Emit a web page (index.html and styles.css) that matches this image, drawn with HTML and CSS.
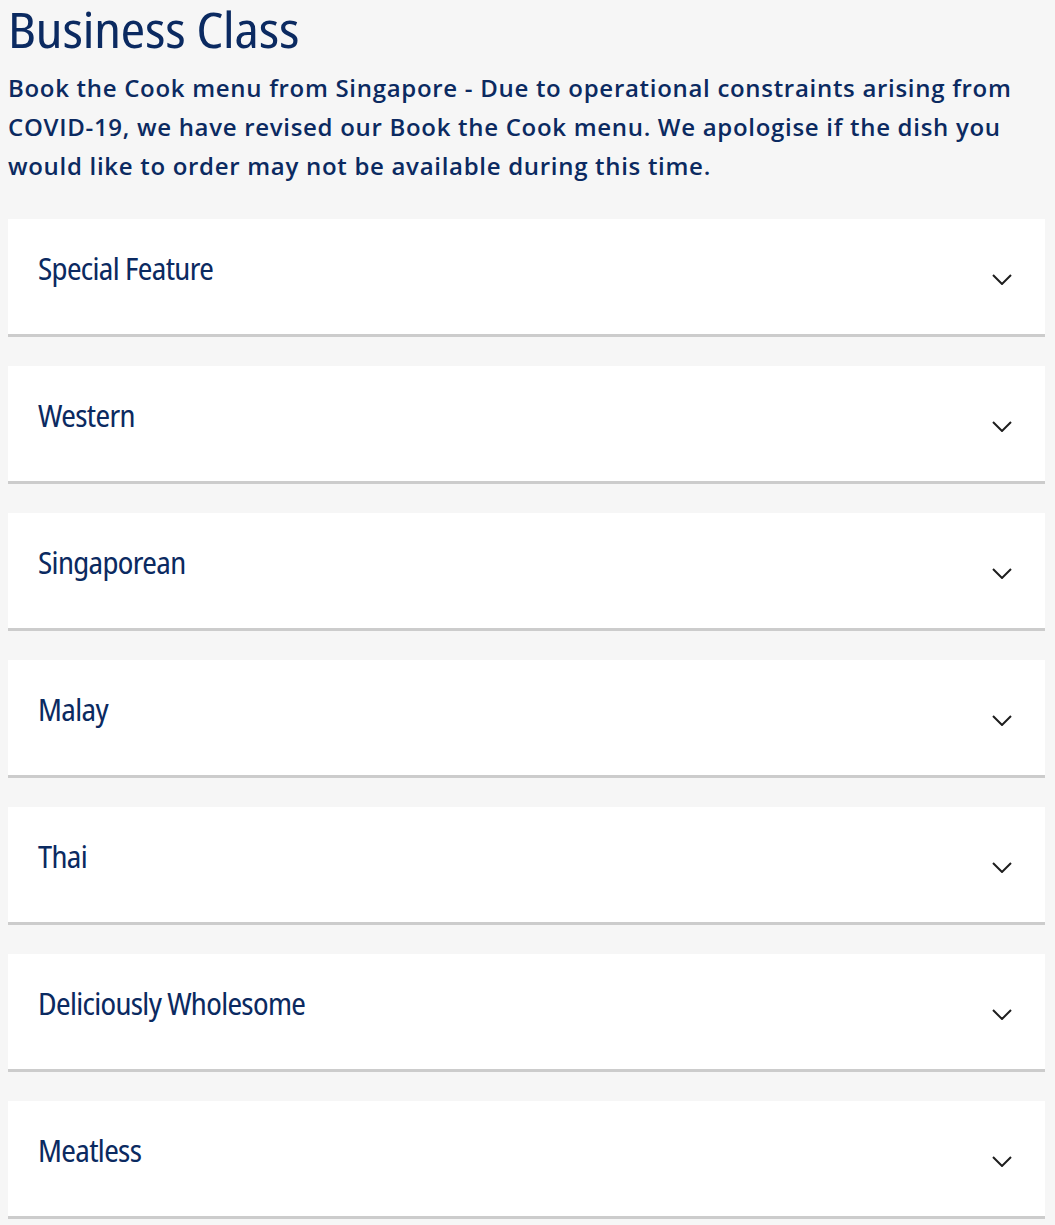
FILE: index.html
```html
<!DOCTYPE html>
<html lang="en">
<head>
<meta charset="utf-8">
<title>Business Class</title>
<link rel="stylesheet" href="styles.css">
</head>
<body>
<main class="page">
  <h1 class="title">Business Class</h1>
  <p class="intro">Book the Cook menu from Singapore - Due to operational constraints arising from COVID-19, we have revised our Book the Cook menu. We apologise if the dish you would like to order may not be available during this time.</p>
  <ul class="accordion">
    <li class="item"><span class="label">Special Feature</span><svg class="chev" viewBox="0 0 20 11"><path d="M1 1 L10 10 L19 1"/></svg></li>
    <li class="item"><span class="label">Western</span><svg class="chev" viewBox="0 0 20 11"><path d="M1 1 L10 10 L19 1"/></svg></li>
    <li class="item"><span class="label">Singaporean</span><svg class="chev" viewBox="0 0 20 11"><path d="M1 1 L10 10 L19 1"/></svg></li>
    <li class="item"><span class="label">Malay</span><svg class="chev" viewBox="0 0 20 11"><path d="M1 1 L10 10 L19 1"/></svg></li>
    <li class="item"><span class="label">Thai</span><svg class="chev" viewBox="0 0 20 11"><path d="M1 1 L10 10 L19 1"/></svg></li>
    <li class="item"><span class="label">Deliciously Wholesome</span><svg class="chev" viewBox="0 0 20 11"><path d="M1 1 L10 10 L19 1"/></svg></li>
    <li class="item"><span class="label">Meatless</span><svg class="chev" viewBox="0 0 20 11"><path d="M1 1 L10 10 L19 1"/></svg></li>
  </ul>
</main>
</body>
</html>
```

FILE: styles.css
```css
html, body {
  margin: 0;
  padding: 0;
  background: #f6f6f6;
}
.page {
  padding: 0 10px 0 8px;
  color: #0b2a61;
}
.title {
  margin: 0;
  padding-top: 1px;
  font-family: "Noto Sans Display", "Open Sans", sans-serif;
  font-weight: 400;
  font-stretch: 87.5%;
  font-size: 50px;
  line-height: 56px;
  letter-spacing: -0.1px;
  color: #0b2a61;
}
.intro {
  margin: 11px 0 0;
  font-family: "Open Sans", sans-serif;
  font-weight: 600;
  font-size: 24px;
  line-height: 39px;
  letter-spacing: 0.7px;
  color: #0b2a61;
}
.accordion {
  list-style: none;
  margin: 34px 0 0;
  padding: 0;
  display: flex;
  flex-direction: column;
  gap: 29px;
}
.item {
  background: #fff;
  height: 115px;
  border-bottom: 3px solid #cccccc;
  display: flex;
  align-items: center;
  justify-content: space-between;
  padding: 0 33px 0 30px;
}
.label {
  font-family: "Noto Sans Display", "Open Sans", sans-serif;
  font-stretch: 87.5%;
  font-size: 30px;
  letter-spacing: -0.65px;
  color: #0b2a61;
  margin-top: -16px;
}
.chev {
  width: 20px;
  height: 11px;
  fill: none;
  stroke: #1e1e1e;
  stroke-width: 2;
  margin-top: 5px;
}
```
